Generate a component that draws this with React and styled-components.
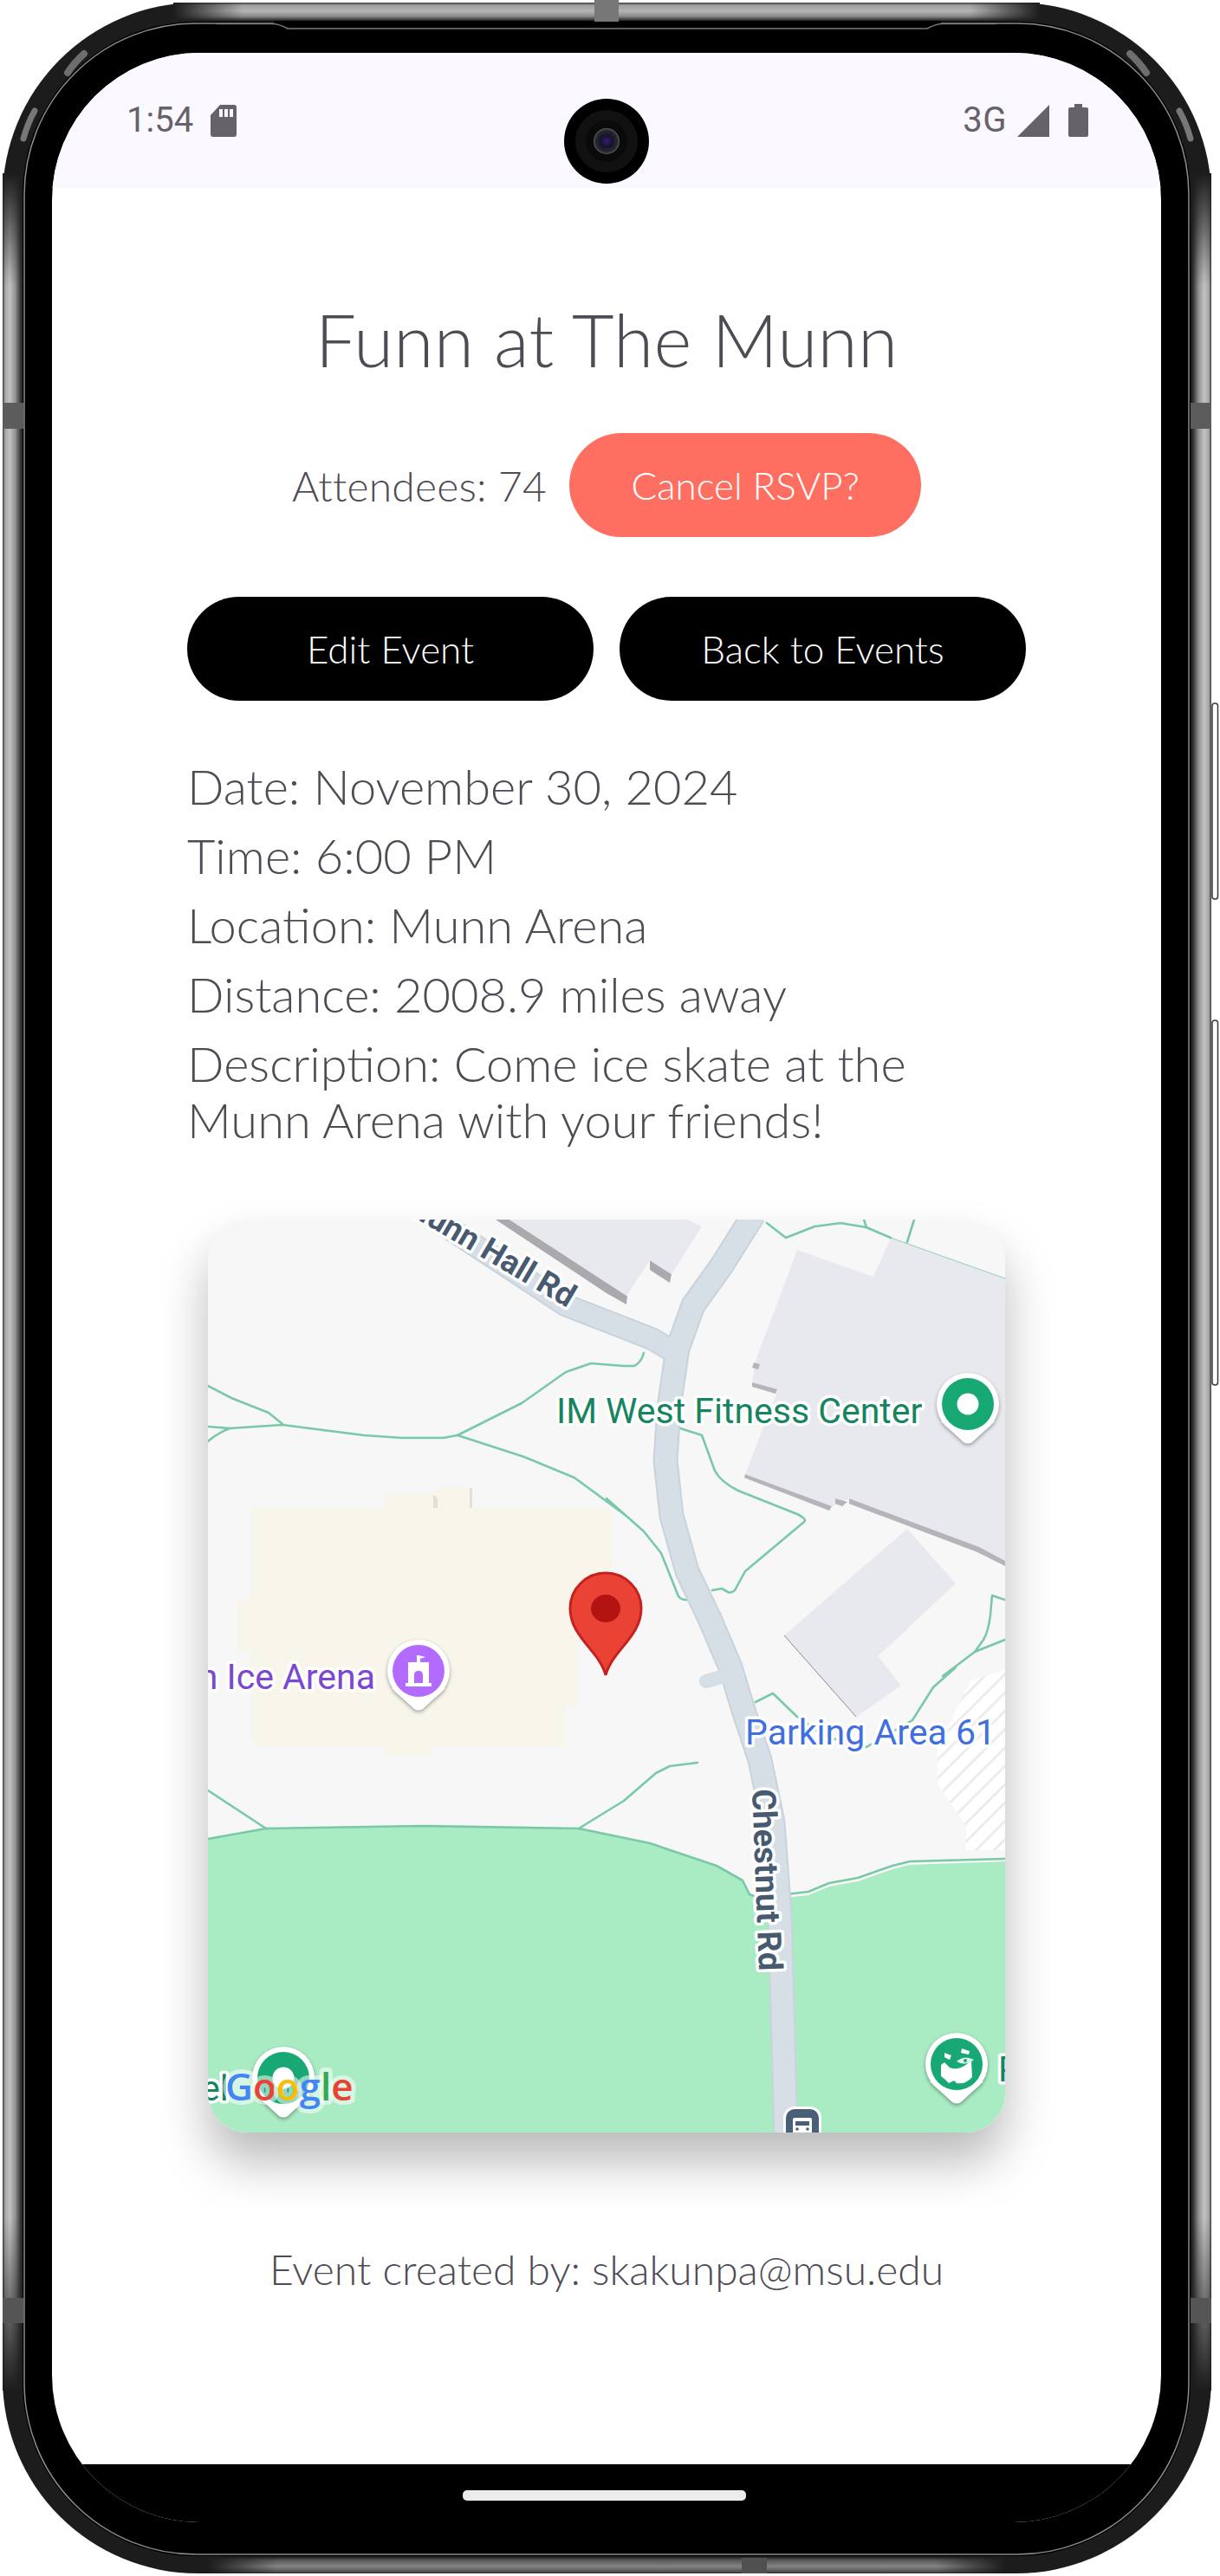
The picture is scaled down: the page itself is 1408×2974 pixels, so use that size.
import React from "react";
import styled, { createGlobalStyle } from "styled-components";

const Global = createGlobalStyle`
  html, body { margin: 0; padding: 0; background: #fff; }
  * { box-sizing: border-box; }
`;

const FONT = `"Lato", "Liberation Sans", sans-serif`;
const INK = "#4f4b55";

const Device = styled.div`
  position: relative;
  width: 1408px;
  height: 2974px;
  padding: 61px 68px 0 60px;
  font-family: ${FONT};
  overflow: hidden;
`;
const CaseArt = styled.svg`
  position: absolute;
  inset: 0;
  width: 1408px;
  height: 2974px;
`;
const Screen = styled.main`
  position: relative;
  width: 1280px;
  height: 2851px;
  border-radius: 170px;
  background: #fff;
  overflow: hidden;
  display: flex;
  flex-direction: column;
`;
const StatusBar = styled.header`
  flex: none;
  height: 156px;
  padding: 0 84px 0 86px;
  background: #fcf8ff;
  display: flex;
  align-items: center;
  justify-content: space-between;
  color: #65626a;
  font-family: Roboto, sans-serif;
  font-size: 40px;
`;
const StatusGroup = styled.div`
  display: flex;
  align-items: center;
  gap: ${(p) => p.$gap}px;
`;
const StatusText = styled.span`
  line-height: 40px;
  letter-spacing: ${(p) => p.$track || 0}px;
`;
const Camera = styled.svg`
  position: absolute;
  left: 651px;
  top: 114px;
  width: 98px;
  height: 98px;
  z-index: 2;
`;
const Content = styled.section`
  flex: 1;
  min-height: 0;
  display: flex;
  flex-direction: column;
  align-items: center;
  color: ${INK};
`;
const Title = styled.h1`
  margin: 125px 0 0;
  font-size: 84px;
  line-height: 100px;
  font-weight: 300;
  letter-spacing: 0.2px;
`;
const AttendRow = styled.div`
  margin-top: 58px;
  display: flex;
  align-items: center;
  gap: 26px;
`;
const Attendees = styled.span`
  font-size: 48px;
  font-weight: 300;
  letter-spacing: 0.2px;
`;
const Pill = styled.button`
  width: ${(p) => p.$w}px;
  height: 120px;
  border: 0;
  border-radius: 60px;
  background: ${(p) => p.$bg};
  color: #fff;
  font-family: ${FONT};
  font-weight: 300;
  font-size: 44px;
  padding: 0;
`;
const ActionRow = styled.div`
  margin-top: 69px;
  display: flex;
  gap: 30px;
`;
const Details = styled.div`
  align-self: flex-start;
  margin: 66px 0 0 156px;
  width: 900px;
  font-size: 56px;
  font-weight: 300;
`;
const DetailLine = styled.p`
  margin: 0;
  line-height: 65px;
  padding-bottom: 15px;
`;
const MapCard = styled.div`
  flex: none;
  margin-top: 68px;
  width: 920px;
  height: 1054px;
  border-radius: 46px;
  overflow: hidden;
  background: #f7f7f7;
  box-shadow: 0 34px 56px rgba(0, 0, 0, 0.27);
`;
const MapArt = styled.svg`
  display: block;
  width: 920px;
  height: 1054px;
`;
const Footer = styled.p`
  margin: 128px 0 0;
  font-size: 48px;
  line-height: 60px;
  font-weight: 300;
`;
const NavBar = styled.nav`
  flex: none;
  height: 67px;
  background: #000;
  display: flex;
  justify-content: center;
  padding: 30px 6px 0 0;
`;
const HomePill = styled.div`
  width: 327px;
  height: 12px;
  border-radius: 5px;
  background: #ececec;
`;

const Label = styled.text`
  font-family: Roboto, sans-serif;
  font-size: ${(p) => p.$size}px;
  font-weight: ${(p) => p.$weight || 400};
  fill: ${(p) => p.$color};
  stroke: #fff;
  stroke-width: 7px;
  stroke-linejoin: round;
  paint-order: stroke;
`;
const LogoText = styled.text`
  font-family: "Open Sans", Roboto, sans-serif;
  font-size: 44px;
  font-weight: 600;
  stroke: rgba(255, 255, 255, 0.55);
  stroke-width: 10px;
  stroke-linejoin: round;
  paint-order: stroke;
`;
const PinGroup = styled.g`
  filter: drop-shadow(0 2px 2px rgba(0, 0, 0, 0.35));
`;

const Poi = ({ x, y, color, children }) => (
  <PinGroup>
    <path d={`M${x - 31} ${y + 20} L${x - 5} ${y + 44} Q${x} ${y + 47} ${x + 5} ${y + 44} L${x + 31} ${y + 20} Z`} fill="#fff" />
    <circle cx={x} cy={y} r={36} fill="#fff" />
    <circle cx={x} cy={y} r={30} fill={color} />
    {children}
  </PinGroup>
);

const trails = [
  "M0 192L27 206L70 223L86 236",
  "M0 239L25 241L86 237L180 249L223 252L272 252L288 249",
  "M0 256Q10 247 25 241",
  "M288 249L362 212L413 176L442 166L480 169L492 169Q500 165 503 154",
  "M288 249L365 274L423 298L480 340",
  "M460 322L503 360L523 385L543 435Q548 441 558 438",
  "M542 240L570 249L585 290Q592 303 612 313L680 340Q692 346 688 349L620 406L608 428Q603 432 600 430L593 426L582 428",
  "M645 4L667 21L700 8L730 4L760 9L788 21",
  "M757 0L760 9",
  "M815 0L807 26",
  "M920 439L905 434L903 456Q901 475 895 485L885 499L848 527",
  "M885 499L920 485",
  "M863 517L837 540L813 578L760 609L713 597L680 574L652 547L632 557",
  "M565 627L533 631L517 639L480 671L428 703",
  "M0 659L67 703",
  "M0 715L67 703L247 700L428 703L510 720L587 746L617 763L625 779L630 781",
  "M667 779L693 776L717 766L750 760L790 746L810 741L920 738",
];
const chestnut = "M630 -6L593 53L560 99L542 149L532 217L528 278L535 342L553 406L580 463L603 517L617 563L637 624L652 696L660 803L663 910L667 1060";
const hallRd = "M263 0L413 99L480 125L513 138L540 154";

const MapDrawing = () => (
  <MapArt viewBox="0 0 920 1054">
    <defs>
      <pattern id="hatch" width="15" height="15" patternUnits="userSpaceOnUse" patternTransform="rotate(-45)">
        <rect width="15" height="15" fill="#fff" />
        <rect width="15" height="3" fill="#ececec" />
      </pattern>
    </defs>
    <rect width="920" height="1054" fill="#f7f7f7" />
    <path d="M0 715L67 703L247 700L428 703L510 720L587 746L617 763L625 779L667 783L693 780L717 770L750 764L790 750L810 745L920 741V1054H0Z" fill="#a9ebc3" />
    <path d="M920 520L880 532L842 610V650L875 700V728H920Z" fill="url(#hatch)" />

    <path d="M50 340Q50 333 57 333H203V317H260L265 310H305V333H458Q466 333 466 341V460H427V562H413V600Q413 608 405 608H258V620H203V608H58Q50 608 50 600V499H34V440H50Z" fill="#f8f5eb" />
    <path d="M260 317L265 322V333H260ZM305 310V333H302V310Z" fill="#e3dfd4" />

    <path d="M332 0H348L484 88L483 98L460 85Z" fill="#a9a9ae" />
    <path d="M510 47L535 63L533 73L510 58Z" fill="#a9a9ae" />
    <path d="M348 0H553L570 8L535 63L510 47L483 88Z" fill="#e8e9ee" />

    <path d="M680 35L768 66L788 21L920 68V394L890 378L740 322L720 331L620 294L640 242L657 199L628 188L632 163Z" fill="#e8e9ee" />
    <path d="M620 294L720 331L717 336L619 298ZM740 322L890 378L920 394V400L888 384L740 328ZM724 322L738 326L732 331L724 328ZM628 188L657 196L655 201L628 193ZM630 165L637 167L635 173L628 171Z" fill="#b4b4b9" />
    <path d="M788 21L920 68" stroke="#8fd0b4" strokeWidth="1" fill="none" />
    <path d="M807 357L863 420L795 484L773 504L800 538L748 574L665 480Z" fill="#e8e9ee" />
    <path d="M665 480L748 574" stroke="#8b8b90" strokeWidth="1" fill="none" />

    <g fill="none" stroke="#79c9a9" strokeWidth="2.6" strokeLinejoin="round" strokeLinecap="round">
      {trails.map((d) => (
        <path key={d} d={d} />
      ))}
    </g>

    <g fill="none" strokeLinejoin="round">
      <path d={hallRd} stroke="#c9d3dc" strokeWidth="27" />
      <path d={chestnut} stroke="#c9d3dc" strokeWidth="29" />
      <path d="M575 533L593 528" stroke="#d6dee6" strokeWidth="16" strokeLinecap="round" />
      <path d={hallRd} stroke="#d6dee6" strokeWidth="23" />
      <path d={chestnut} stroke="#d6dee6" strokeWidth="25" />
    </g>

    <Label x="0" y="0" transform="translate(415 102) rotate(30.5)" textAnchor="end" $size={37} $weight={700} $color="#475a70">Munn Hall Rd</Label>
    <Label x="0" y="0" transform="translate(628 658) rotate(87.8)" $size={38} $weight={700} $color="#475a70">Chestnut Rd</Label>
    <Label x="402" y="235" $size={41} $color="#178460">IM West Fitness Center</Label>
    <Label x="193" y="542" textAnchor="end" $size={41} $color="#7b47d3">Munn Ice Arena</Label>
    <Label x="620" y="606" $size={41} $color="#3f6fe0">Parking Area 61</Label>
    <Label x="-8" y="1017" $size={41} $color="#178460">el</Label>
    <Label x="912" y="995" $size={41} $color="#178460">P</Label>

    <Poi x={877} y={213} color="#18a874">
      <circle cx={877} cy={213} r={12.5} fill="#fff" />
    </Poi>
    <Poi x={243} y={521} color="#b36bff">
      <path d="M243 503L251 505L245 507V511H255V535H258V539H228V535H231V511H241V503ZM238 535H248V526Q248 521 243 521Q238 521 238 526Z" fill="#fff" fillRule="evenodd" />
    </Poi>
    <Poi x={87} y={991} color="#18a874">
      <circle cx={87} cy={991} r={12.5} fill="#fff" />
    </Poi>
    <Poi x={864} y={975} color="#18a874">
      <path d="M846 976L850 973L856 979Q865 983 876 975L881 971L882 990Q874 999 864 997L861 994L855 997L851 993L846 989Z" fill="#fff" />
      <path d="M850 962L858 965L856 970L850 967ZM870 957L879 960L878 964L869 962Z" fill="#fff" />
      <path d="M864 972Q873 964 884 970Q875 978 864 972Z" fill="#dff5ec" />
      <circle cx={874} cy={971} r={2} fill="#18a874" />
    </Poi>

    <g>
      <rect x="664" y="1024" width="44" height="44" rx="13" fill="#fff" />
      <rect x="667" y="1027" width="38" height="38" rx="10" fill="#4a6078" />
      <path d="M677 1037H695Q697 1037 697 1039V1054H675V1039Q675 1037 677 1037Z" fill="#fff" />
      <rect x="678" y="1041" width="16" height="5" fill="#4a6078" />
      <circle cx="680" cy="1050" r="1.8" fill="#4a6078" />
      <circle cx="692" cy="1050" r="1.8" fill="#4a6078" />
    </g>

    <LogoText x="20" y="1017" textAnchor="start">
      <tspan fill="#4285f4">G</tspan>
      <tspan fill="#ea4335">o</tspan>
      <tspan fill="#fbbc05">o</tspan>
      <tspan fill="#4285f4">g</tspan>
      <tspan fill="#34a853">l</tspan>
      <tspan fill="#ea4335">e</tspan>
    </LogoText>

    <path d="M459 526C452 498 418 482 418 449A41 41 0 0 1 500 449C500 482 466 498 459 526Z" fill="#ea4335" stroke="#c5221f" strokeWidth="3" />
    <ellipse cx="459" cy="449" rx="17" ry="16" fill="#b31412" />
  </MapArt>
);

const CaseDrawing = () => (
  <CaseArt viewBox="0 0 1408 2974">
    <defs>
      <linearGradient id="bandL" x1="0" x2="1" y1="0" y2="0">
        <stop offset="0" stopColor="#3a3a3a" />
        <stop offset="0.12" stopColor="#a8a8a8" />
        <stop offset="0.35" stopColor="#c2c2c2" />
        <stop offset="0.62" stopColor="#8f8f8f" />
        <stop offset="0.85" stopColor="#3c3c3c" />
        <stop offset="1" stopColor="#151515" />
      </linearGradient>
      <linearGradient id="bandR" x1="1" x2="0" y1="0" y2="0">
        <stop offset="0" stopColor="#3a3a3a" />
        <stop offset="0.12" stopColor="#a8a8a8" />
        <stop offset="0.35" stopColor="#c2c2c2" />
        <stop offset="0.62" stopColor="#8f8f8f" />
        <stop offset="0.85" stopColor="#3c3c3c" />
        <stop offset="1" stopColor="#151515" />
      </linearGradient>
      <linearGradient id="bandT" x1="0" x2="0" y1="0" y2="1">
        <stop offset="0" stopColor="#3a3a3a" />
        <stop offset="0.14" stopColor="#a0a0a0" />
        <stop offset="0.45" stopColor="#b4b4b4" />
        <stop offset="0.72" stopColor="#8a8a8a" />
        <stop offset="0.9" stopColor="#3c3c3c" />
        <stop offset="1" stopColor="#101010" />
      </linearGradient>
      <linearGradient id="bandB" x1="0" x2="0" y1="0" y2="1">
        <stop offset="0" stopColor="#111" />
        <stop offset="0.25" stopColor="#5a5a5a" />
        <stop offset="0.6" stopColor="#858585" />
        <stop offset="0.88" stopColor="#555" />
        <stop offset="1" stopColor="#2a2a2a" />
      </linearGradient>
      <linearGradient id="fadeDown" x1="0" x2="0" y1="0" y2="1">
        <stop offset="0" stopColor="#1c1c1c" />
        <stop offset="1" stopColor="#1c1c1c" stopOpacity="0" />
      </linearGradient>
      <linearGradient id="fadeUp" x1="0" x2="0" y1="1" y2="0">
        <stop offset="0" stopColor="#1c1c1c" />
        <stop offset="1" stopColor="#1c1c1c" stopOpacity="0" />
      </linearGradient>
      <linearGradient id="fadeRight" x1="0" x2="1" y1="0" y2="0">
        <stop offset="0" stopColor="#1c1c1c" />
        <stop offset="1" stopColor="#1c1c1c" stopOpacity="0" />
      </linearGradient>
      <linearGradient id="fadeLeft" x1="1" x2="0" y1="0" y2="0">
        <stop offset="0" stopColor="#1c1c1c" />
        <stop offset="1" stopColor="#1c1c1c" stopOpacity="0" />
      </linearGradient>
    </defs>

    <rect x="1399" y="812" width="6.5" height="226" rx="3" fill="#fff" stroke="#3a3a3a" strokeWidth="1.5" />
    <rect x="1399" y="1178" width="6.5" height="421" rx="3" fill="#fff" stroke="#3a3a3a" strokeWidth="1.5" />

    <rect x="3" y="3" width="1395" height="2968" rx="225" fill="#1c1c1c" />

    <rect x="3" y="200" width="24" height="2560" fill="url(#bandL)" />
    <rect x="1374" y="200" width="24" height="2560" fill="url(#bandR)" />
    <rect x="200" y="3" width="1000" height="22" fill="url(#bandT)" />
    <rect x="240" y="2951" width="920" height="20" fill="url(#bandB)" />

    <rect x="3" y="200" width="24" height="130" fill="url(#fadeDown)" />
    <rect x="1374" y="200" width="24" height="130" fill="url(#fadeDown)" />
    <rect x="3" y="2560" width="24" height="200" fill="url(#fadeUp)" />
    <rect x="1374" y="2560" width="24" height="200" fill="url(#fadeUp)" />
    <rect x="200" y="3" width="80" height="22" fill="url(#fadeRight)" />
    <rect x="1120" y="3" width="80" height="22" fill="url(#fadeLeft)" />
    <rect x="240" y="2951" width="80" height="20" fill="url(#fadeRight)" />
    <rect x="1080" y="2951" width="80" height="20" fill="url(#fadeLeft)" />

    <rect x="26" y="25" width="1348" height="2926" rx="200" fill="#000" />
    <rect x="28" y="27" width="1344" height="2922" rx="198" fill="none" stroke="#8a8a8a" strokeWidth="1.5" />
    <rect x="316" y="24" width="770" height="8" fill="#000" />
    <path d="M250 27.5H314Q322 27.5 332 33H1070Q1080 27.5 1088 27.5H1150" fill="none" stroke="#777" strokeWidth="1.5" />

    <path d="M78 84Q86 72 97 62" stroke="#6e6e6e" strokeWidth="8" strokeLinecap="round" fill="none" />
    <path d="M40 128Q32 142 27 160" stroke="#777" strokeWidth="7" strokeLinecap="round" fill="none" />
    <path d="M1323 84Q1315 72 1304 62" stroke="#6e6e6e" strokeWidth="8" strokeLinecap="round" fill="none" />
    <path d="M1361 128Q1369 142 1374 160" stroke="#777" strokeWidth="7" strokeLinecap="round" fill="none" />

    <rect x="3" y="465" width="24" height="30" fill="#5c5c5c" />
    <rect x="1374" y="465" width="24" height="30" fill="#5c5c5c" />
    <rect x="3" y="2653" width="24" height="29" fill="#555" />
    <rect x="1374" y="2653" width="24" height="29" fill="#555" />
    <rect x="686" y="0" width="28" height="25" fill="#777" />
    <rect x="856" y="2953" width="29" height="18" fill="#505050" />
  </CaseArt>
);

export default function App() {
  return (
    <>
      <Global />
      <Device>
        <CaseDrawing />
        <Screen>
          <StatusBar>
            <StatusGroup $gap={20}>
              <StatusText>1:54</StatusText>
              <svg width="30" height="37" viewBox="0 0 30 37">
                <path d="M11 0H27Q30 0 30 3V34Q30 37 27 37H3Q0 37 0 34V12Z" fill="#65626a" />
                <path d="M12 5h4v9h-4zM18 5h4v9h-4zM24 5h4v9h-4z" fill="#fcf8ff" transform="translate(-2 0)" />
              </svg>
            </StatusGroup>
            <StatusGroup $gap={12}>
              <StatusText $track={0.5}>3G</StatusText>
              <svg width="37" height="37" viewBox="0 0 37 37">
                <path d="M37 0V37H0Z" fill="#65626a" />
              </svg>
              <svg width="23" height="38" viewBox="0 0 23 38" style={{ marginLeft: 10 }}>
                <path d="M7 0H16V4H21Q23 4 23 6V36Q23 38 21 38H2Q0 38 0 36V6Q0 4 2 4H7Z" fill="#65626a" />
              </svg>
            </StatusGroup>
          </StatusBar>
          <Content>
            <Title>Funn at The Munn</Title>
            <AttendRow>
              <Attendees>Attendees: 74</Attendees>
              <Pill $w={406} $bg="#ff6f61">Cancel RSVP?</Pill>
            </AttendRow>
            <ActionRow>
              <Pill $w={469} $bg="#000">Edit Event</Pill>
              <Pill $w={469} $bg="#000">Back to Events</Pill>
            </ActionRow>
            <Details>
              <DetailLine>Date: November 30, 2024</DetailLine>
              <DetailLine>Time: 6:00 PM</DetailLine>
              <DetailLine>Location: Munn Arena</DetailLine>
              <DetailLine>Distance: 2008.9 miles away</DetailLine>
              <DetailLine>Description: Come ice skate at the Munn Arena with your friends!</DetailLine>
            </Details>
            <MapCard>
              <MapDrawing />
            </MapCard>
            <Footer>Event created by: skakunpa@msu.edu</Footer>
          </Content>
          <NavBar>
            <HomePill />
          </NavBar>
        </Screen>
        <Camera viewBox="0 0 98 98">
          <defs>
            <radialGradient id="lens">
              <stop offset="0" stopColor="#3b1a7a" />
              <stop offset="0.45" stopColor="#14142a" />
              <stop offset="0.85" stopColor="#2a2a30" />
              <stop offset="1" stopColor="#5a5f66" />
            </radialGradient>
          </defs>
          <circle cx="49" cy="49" r="49" fill="#000" />
          <circle cx="49" cy="49" r="36" fill="#111" />
          <circle cx="49" cy="49" r="24" fill="#0a0a0a" />
          <circle cx="49" cy="49" r="15" fill="url(#lens)" />
        </Camera>
      </Device>
    </>
  );
}
